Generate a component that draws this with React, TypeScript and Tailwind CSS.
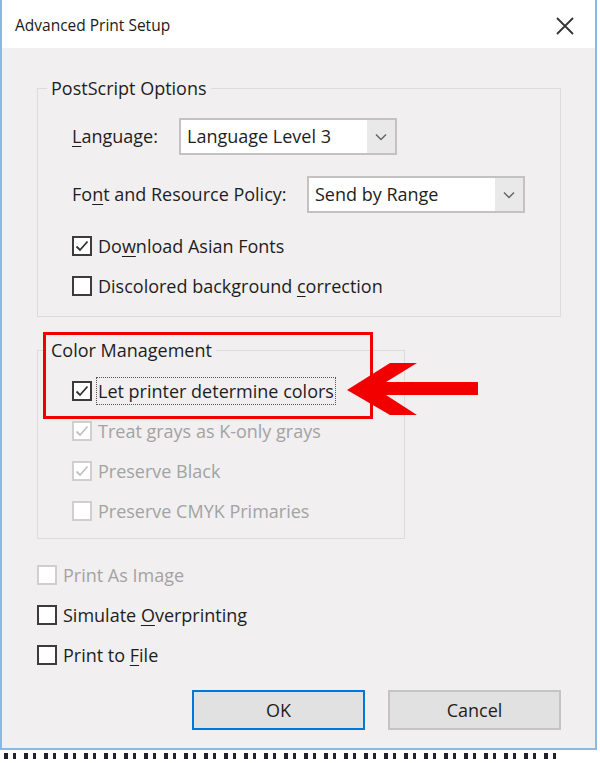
import React from "react";

function Check({ checked, disabled }: { checked?: boolean; disabled?: boolean }) {
  return (
    <span
      className={`flex h-[20px] w-[20px] shrink-0 items-center justify-center border-2 bg-white ${
        disabled ? "border-[#cfcfcf]" : "border-[#3c3c3c]"
      }`}
    >
      {checked && (
        <svg width="16" height="16" viewBox="0 0 16 16" fill="none">
          <path
            d="M2.5 8.5 L6 12 L13.5 3.5"
            stroke={disabled ? "#c2c2c2" : "#333"}
            strokeWidth="1.8"
          />
        </svg>
      )}
    </span>
  );
}

function CheckRow({
  checked,
  disabled,
  focused,
  children,
  className = "",
}: {
  checked?: boolean;
  disabled?: boolean;
  focused?: boolean;
  children: React.ReactNode;
  className?: string;
}) {
  return (
    <div className={`flex h-[24px] items-center ${className}`}>
      <Check checked={checked} disabled={disabled} />
      <span
        className={`ml-[4px] whitespace-nowrap leading-[24px] ${disabled ? "text-[#a3a3a3]" : "text-[#1e1e1e]"} ${
          focused ? "border border-dotted border-[#555] px-[1px] leading-[26px]" : "px-[2px]"
        }`}
      >
        {children}
      </span>
    </div>
  );
}

function Select({ value, width }: { value: string; width: string }) {
  return (
    <div className={`flex h-[37px] items-stretch border-2 border-[#c2c2c2] bg-[#e9e9e9] ${width}`}>
      <div className="flex flex-1 items-center bg-white px-[6px] text-[#1e1e1e]">{value}</div>
      <div className="flex w-[28px] items-center justify-center">
        <svg width="12" height="8" viewBox="0 0 12 8" fill="none">
          <path d="M1 1.5 L6 6.5 L11 1.5" stroke="#666" strokeWidth="1.5" />
        </svg>
      </div>
    </div>
  );
}

const U = ({ c }: { c: string }) => <span className="underline underline-offset-[3px]">{c}</span>;

export default function App() {
  return (
    <div className="relative h-[763px] w-[600px] overflow-hidden bg-white font-['Open_Sans','Noto_Sans',sans-serif] text-[18px]">
      <div className="flex">
        {/* dialog window */}
        <div className="flex h-[750px] w-[597px] flex-col border-x-2 border-b-2 border-[#8ab8e6] bg-[#f1eff0]">
          {/* title bar */}
          <div className="flex h-[48px] items-center justify-between bg-white pl-[13px] pr-[20px] pt-[3px]">
            <span className="text-[15.5px] text-[#1a1a1a]">Advanced Print Setup</span>
            <svg width="20" height="20" viewBox="0 0 20 20" fill="none">
              <path d="M2 2 L18 18 M18 2 L2 18" stroke="#333" strokeWidth="1.8" />
            </svg>
          </div>

          <div className="flex flex-col pl-[35px] pr-[34px] pt-[29px]">
            {/* PostScript Options */}
            <fieldset className="border border-[#dcdcdc]">
              <legend className="ml-[9px] px-[4px] leading-[22px] text-[#1e1e1e]">PostScript Options</legend>
              <div className="flex flex-col pb-[18px] pl-[34px]">
                <div className="mt-[19px] flex h-[37px] items-center">
                  <span className="w-[107px] text-[#1e1e1e]">
                    <U c="L" />
                    anguage:
                  </span>
                  <Select value="Language Level 3" width="w-[218px]" />
                </div>
                <div className="mt-[21px] flex h-[37px] items-center">
                  <span className="w-[235px] text-[#1e1e1e]">
                    Fo<U c="n" />t and Resource Policy:
                  </span>
                  <Select value="Send by Range" width="w-[218px]" />
                </div>
                <CheckRow checked className="mt-[21px]">
                  Do<U c="w" />nload Asian Fonts
                </CheckRow>
                <CheckRow className="mt-[16px]">
                  Discolored background <U c="c" />orrection
                </CheckRow>
              </div>
            </fieldset>

            {/* Color Management */}
            <fieldset className="mt-[22px] w-[368px] border border-[#dcdcdc]">
              <legend className="ml-[9px] px-[4px] leading-[22px] text-[#1e1e1e]">Color Management</legend>
              <div className="mt-[18px] flex flex-col gap-[16px] pb-[15px] pl-[34px]">
                <CheckRow checked focused>
                  Let printer determine colors
                </CheckRow>
                <CheckRow checked disabled>
                  Treat grays as K-only grays
                </CheckRow>
                <CheckRow checked disabled>
                  Preserve Black
                </CheckRow>
                <CheckRow disabled>Preserve CMYK Primaries</CheckRow>
              </div>
            </fieldset>

            <div className="mt-[24px] flex flex-col gap-[16px]">
              <CheckRow disabled>Print As Image</CheckRow>
              <CheckRow>
                Simulate <U c="O" />verprinting
              </CheckRow>
              <CheckRow>
                Print to <U c="F" />ile
              </CheckRow>
            </div>

            <div className="mt-[23px] flex justify-end gap-[23px]">
              <button className="h-[40px] w-[173px] border-2 border-[#0078d7] bg-[#e1e1e1] text-[#1e1e1e]">OK</button>
              <button className="h-[40px] w-[173px] border-2 border-[#c4c4c4] bg-[#e1e1e1] text-[#1e1e1e]">Cancel</button>
            </div>
          </div>
        </div>
        {/* desktop behind, right edge */}
        <div className="flex-1 bg-white" />
      </div>
      {/* desktop behind, bottom edge */}
      <div className="h-[13px] bg-white pl-[4px] pt-[3px]">
        <div className="h-[6px] w-[560px] bg-[repeating-linear-gradient(90deg,#202030_0_4px,transparent_4px_9px,#202030_9px_12px,transparent_12px_20px)]" />
      </div>

      {/* annotation overlay */}
      <div className="absolute left-[43px] top-[332px] h-[87px] w-[330px] border-[3px] border-[#f20000]" />
      <svg className="absolute left-0 top-0" width="600" height="763" viewBox="0 0 600 763">
        <polygon
          points="347,390 390,363 417,363 386,382 478,382 478,395 386,395 417,415 390,415"
          fill="#f20000"
        />
      </svg>
    </div>
  );
}
